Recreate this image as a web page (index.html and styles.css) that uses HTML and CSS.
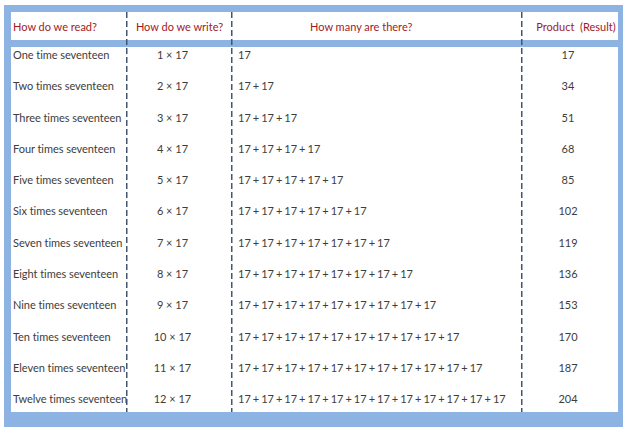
FILE: index.html
```html
<!DOCTYPE html>
<html>
<head>
<meta charset="utf-8">
<link rel="stylesheet" href="styles.css">
</head>
<body>
<div class="frame">
  <div class="grid">
    <div class="band"></div>
    <div class="div d1"></div>
    <div class="div d2"></div>
    <div class="div d3"></div>

    <div class="h h1">How do we read?</div>
    <div class="h h2">How do we write?</div>
    <div class="h h3">How many are there?</div>
    <div class="h h4">Product&nbsp; (Result)</div>

    <div class="c c1">One time seventeen</div><div class="c c2">1 × 17</div><div class="c c3">17</div><div class="c c4">17</div>
    <div class="c c1">Two times seventeen</div><div class="c c2">2 × 17</div><div class="c c3">17 + 17</div><div class="c c4">34</div>
    <div class="c c1">Three times seventeen</div><div class="c c2">3 × 17</div><div class="c c3">17 + 17 + 17</div><div class="c c4">51</div>
    <div class="c c1">Four times seventeen</div><div class="c c2">4 × 17</div><div class="c c3">17 + 17 + 17 + 17</div><div class="c c4">68</div>
    <div class="c c1">Five times seventeen</div><div class="c c2">5 × 17</div><div class="c c3">17 + 17 + 17 + 17 + 17</div><div class="c c4">85</div>
    <div class="c c1">Six times seventeen</div><div class="c c2">6 × 17</div><div class="c c3">17 + 17 + 17 + 17 + 17 + 17</div><div class="c c4">102</div>
    <div class="c c1">Seven times seventeen</div><div class="c c2">7 × 17</div><div class="c c3">17 + 17 + 17 + 17 + 17 + 17 + 17</div><div class="c c4">119</div>
    <div class="c c1">Eight times seventeen</div><div class="c c2">8 × 17</div><div class="c c3">17 + 17 + 17 + 17 + 17 + 17 + 17 + 17</div><div class="c c4">136</div>
    <div class="c c1">Nine times seventeen</div><div class="c c2">9 × 17</div><div class="c c3">17 + 17 + 17 + 17 + 17 + 17 + 17 + 17 + 17</div><div class="c c4">153</div>
    <div class="c c1">Ten times seventeen</div><div class="c c2">10 × 17</div><div class="c c3">17 + 17 + 17 + 17 + 17 + 17 + 17 + 17 + 17 + 17</div><div class="c c4">170</div>
    <div class="c c1">Eleven times seventeen</div><div class="c c2">11 × 17</div><div class="c c3">17 + 17 + 17 + 17 + 17 + 17 + 17 + 17 + 17 + 17 + 17</div><div class="c c4">187</div>
    <div class="c c1">Twelve times seventeen</div><div class="c c2">12 × 17</div><div class="c c3">17 + 17 + 17 + 17 + 17 + 17 + 17 + 17 + 17 + 17 + 17 + 17</div><div class="c c4">204</div>
  </div>
</div>
</body>
</html>
```

FILE: styles.css
```css
html, body {
  margin: 0;
  padding: 0;
  background: #ffffff;
}

body {
  font-family: Lato, "Open Sans", sans-serif;
  font-size: 11px;
  color: #3d3d3d;
}

.frame {
  box-sizing: border-box;
  width: 619px;
  height: 422px;
  margin: 5px 0 0 4px;
  padding: 7px 5px 15px 7px;
  background: #8db3e2;
}

.grid {
  display: grid;
  grid-template-columns: 115px 2px 103px 2px 288px 2px 95px;
  grid-template-rows: 28px 7px repeat(11, 31.3px) 1fr;
  height: 400px;
  background: #ffffff;
}

.band {
  grid-column: 1 / -1;
  grid-row: 2;
  background: #8db3e2;
}

.div {
  grid-row: 1 / -1;
  background-image: repeating-linear-gradient(to bottom, #44566f 0, #44566f 6px, transparent 6px, transparent 9px);
  background-size: 1.5px 100%;
  background-repeat: no-repeat;
  background-position: center top;
}

.d1 { grid-column: 2; }
.d2 { grid-column: 4; }
.d3 { grid-column: 6; }

.h {
  display: flex;
  align-items: center;
  color: #a11a1f;
  white-space: nowrap;
}

.h1 { padding-left: 2px; }
.h2 { justify-content: center; }
.h3 { padding-left: 77px; }
.h4 { justify-content: center; padding-left: 11px; }

.c {
  line-height: 16px;
  white-space: nowrap;
}

.c1 { padding-left: 2px; letter-spacing: -0.05px; }
.c2 { text-align: center; padding-right: 14px; }
.c3 { padding-left: 5px; word-spacing: -0.8px; }
.c4 { text-align: center; padding-right: 5px; }
```
